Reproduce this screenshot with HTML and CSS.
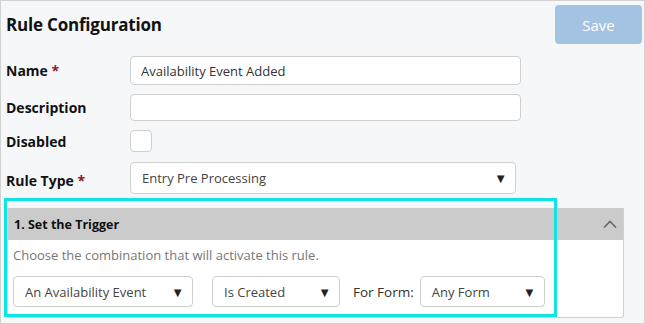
FILE: index.html
```html
<!DOCTYPE html>
<html lang="en">
<head>
  <meta charset="UTF-8">
  <title>Rule Configuration</title>
  <link rel="stylesheet" href="styles.css">
</head>
<body>
  <div class="page">
    <header>
      <h1>Rule Configuration</h1>
      <button class="save" disabled>Save</button>
    </header>

    <div class="form">
      <div class="row row-name">
        <label>Name <span class="req">*</span></label>
        <input type="text" class="text" value="Availability Event Added">
      </div>
      <div class="row row-desc">
        <label>Description</label>
        <input type="text" class="text">
      </div>
      <div class="row row-check">
        <label>Disabled</label>
        <span class="check"></span>
      </div>
      <div class="row row-type">
        <label>Rule Type <span class="req">*</span></label>
        <div class="select wide">Entry Pre Processing<span class="arrow">&#9660;</span></div>
      </div>
    </div>

    <div class="panel">
      <div class="panel-head">
        <span>1. Set the Trigger</span>
        <svg class="chev" width="14" height="8" viewBox="0 0 14 8"><path d="M1 7.5 L7 1.5 L13 7.5" fill="none" stroke="#666" stroke-width="1.6"/></svg>
      </div>
      <div class="panel-body">
        <p class="hint">Choose the combination that will activate this rule.</p>
        <div class="trigger">
          <div class="select s1">An Availability Event<span class="arrow">&#9660;</span></div>
          <div class="select s2">Is Created<span class="arrow">&#9660;</span></div>
          <span class="for">For Form:</span>
          <div class="select s3">Any Form<span class="arrow">&#9660;</span></div>
        </div>
      </div>
      <div class="highlight"></div>
    </div>
  </div>
</body>
</html>
```

FILE: styles.css
```css
body { margin: 0; font-family: "Open Sans", sans-serif; }

.page {
  width: 645px;
  height: 324px;
  box-sizing: border-box;
  border: 1px solid #d2d2d2;
  background: #f6f7f9;
  position: relative;
}

header {
  display: flex;
  justify-content: space-between;
  align-items: flex-start;
  height: 51px;
  padding: 4px 2px 0 5px;
}
h1 {
  margin: 8px 0 0;
  font-size: 17px;
  font-weight: 700;
  color: #111;
  letter-spacing: -0.2px;
}
.save {
  width: 87px;
  height: 39px;
  border: none;
  border-radius: 4px;
  background: #a4c2e2;
  color: #fff;
  font-family: inherit;
  font-size: 15px;
}

.form { padding-left: 5px; }
.row {
  display: grid;
  grid-template-columns: 124px auto;
  align-items: center;
}
.row label {
  font-size: 14px;
  font-weight: 700;
  color: #111;
}
.req { color: #8b1a1a; }
.row-name { height: 29px; }
.row-desc { height: 27px; margin-top: 9px; }
.row-check { height: 22px; margin-top: 9px; }
.row-type { height: 32px; margin-top: 10px; }
.row-type label { padding-top: 4px; }

.text {
  box-sizing: border-box;
  width: 391px;
  height: 100%;
  border: 1px solid #cfcfcf;
  border-radius: 4px;
  padding: 0 10px;
  font-family: inherit;
  font-size: 13px;
  color: #333;
  background: #fff;
}
.check {
  width: 20px;
  height: 20px;
  border: 1px solid #cfcfcf;
  border-radius: 4px;
  background: #fff;
}

.select {
  box-sizing: border-box;
  display: flex;
  align-items: center;
  justify-content: space-between;
  height: 100%;
  border: 1px solid #cfcfcf;
  border-radius: 4px;
  background: #fff;
  padding: 0 8px 0 11px;
  font-size: 13px;
  color: #444;
}
.select.wide { width: 386px; }
.arrow { font-size: 13px; color: #222; }

.panel {
  position: relative;
  margin: 14px 20px 0 6px;
  border: 1px solid #d0d0d0;
  border-top: none;
  border-radius: 0 0 3px 3px;
  background: #fff;
}
.panel-head {
  display: flex;
  justify-content: space-between;
  align-items: center;
  height: 32px;
  padding: 0 6px 0 6px;
  background: #cbcbcb;
  font-size: 12.5px;
  font-weight: 700;
  color: #111;
}
.panel-body { padding: 6px 0 9px 5px; height: 62px; }
.hint {
  margin: 0;
  font-size: 13px;
  color: #777;
}
.trigger {
  display: flex;
  align-items: center;
  height: 31px;
  margin-top: 12px;
}
.s1 { width: 180px; }
.s2 { width: 128px; margin-left: 19px; }
.s3 { width: 125px; }
.for {
  font-size: 13.5px;
  color: #333;
  margin: 0 6px 0 13px;
}

.highlight {
  position: absolute;
  left: -4px;
  top: -10px;
  width: 547px;
  height: 113px;
  border: 3px solid #0fe3e3;
}
```
